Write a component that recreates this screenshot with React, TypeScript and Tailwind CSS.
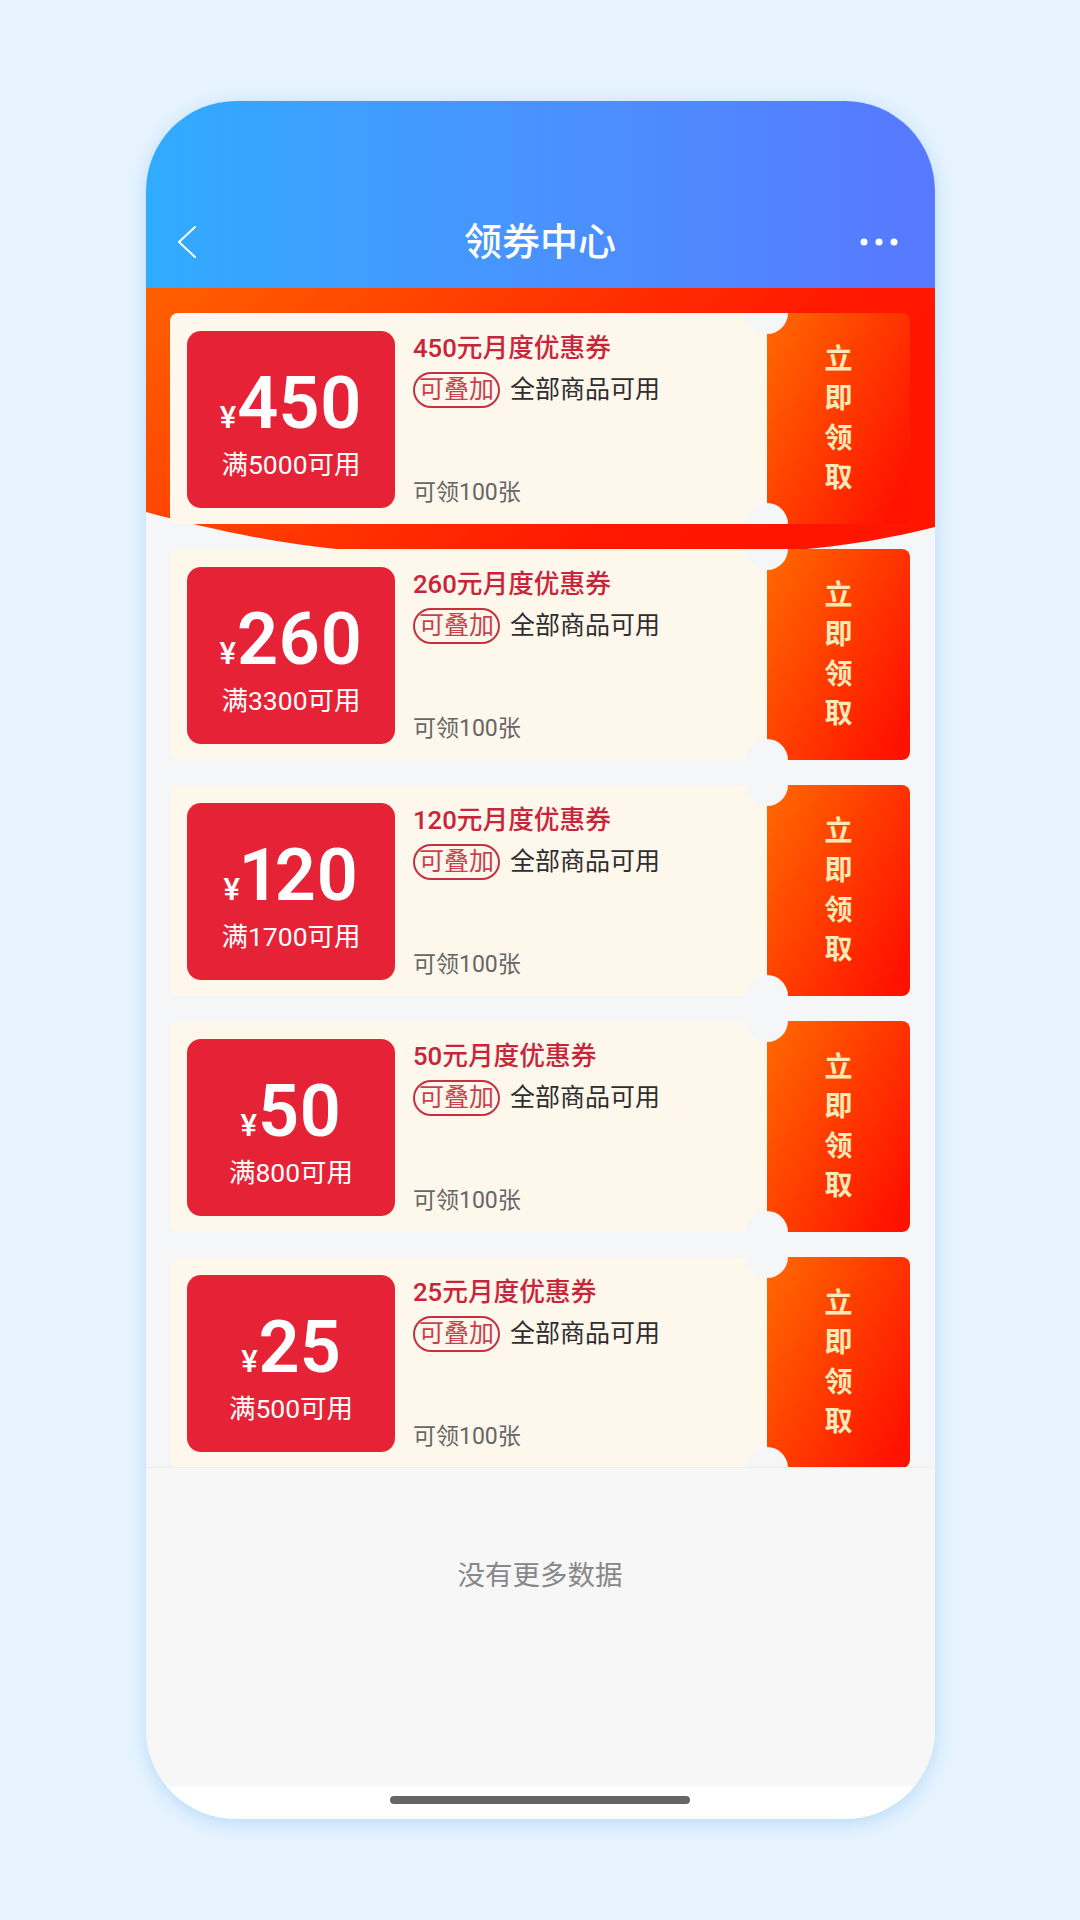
const font = { fontFamily: '"Roboto", "Noto Sans CJK SC", sans-serif' };

const coupons = [
  { amount: "450", min: "满5000可用", title: "450元月度优惠券" },
  { amount: "260", min: "满3300可用", title: "260元月度优惠券" },
  { amount: "120", min: "满1700可用", title: "120元月度优惠券" },
  { amount: "50", min: "满800可用", title: "50元月度优惠券" },
  { amount: "25", min: "满500可用", title: "25元月度优惠券" },
];

const CouponCard = ({ amount, min, title }: { amount: string; min: string; title: string }) => {
  return (
    <div className="relative flex h-[211px] w-[740px] shrink-0 overflow-hidden rounded-[8px]">
      <div className="flex w-[597px] bg-[#FEF7EB] pl-[17px] pt-[18px]">
        <div className="flex h-[177px] w-[208px] flex-col items-center rounded-[14px] bg-[#E62336] pt-[37px] text-white">
          <div className="flex h-[72px] items-baseline leading-[72px]">
            <span className="mr-[1px] text-[31px] font-medium">¥</span>
            <span className="text-[72px] font-semibold proportional-nums">{amount}</span>
          </div>
          <div className="mt-[10px] text-[26.5px] leading-[30px]">{min}</div>
        </div>
        <div className="ml-[18px] flex h-[177px] flex-col">
          <div className="text-[25.7px] font-medium leading-[34px] text-[#C9243A]">{title}</div>
          <div className="mt-[6px] flex items-center">
            <span className="flex h-[36px] w-[87px] items-center justify-center rounded-full border-2 border-[#C9303F] text-[25px] text-[#C9404E]">
              可叠加
            </span>
            <span className="ml-[10px] text-[25px] text-[#2E2E2E]">全部商品可用</span>
          </div>
          <div className="mt-auto text-[23px] leading-[30px] text-[#666666]">可领100张</div>
        </div>
      </div>
      <div className="flex w-[143px] flex-col items-center justify-center bg-[linear-gradient(115deg,#FF6A00,#FF1300_90%)] text-[28px] font-bold leading-[39.5px] text-[#FFE9B8]">
        <span>立</span>
        <span>即</span>
        <span>领</span>
        <span>取</span>
      </div>
      <div className="absolute -top-[21px] left-[576px] h-[42px] w-[42px] rounded-full bg-[#F5F6F8]"></div>
      <div className="absolute -bottom-[21px] left-[576px] h-[42px] w-[42px] rounded-full bg-[#F5F6F8]"></div>
    </div>
  );
};

export default function App() {
  return (
    <div className="h-[1920px] overflow-hidden bg-[#E6F3FF] pt-[101px]" style={font}>
      <div className="mx-auto flex h-[1718px] w-[789px] flex-col overflow-hidden rounded-[90px] bg-white shadow-[0_4px_18px_#B8DAF8]">
        <header className="flex h-[187px] shrink-0 items-end bg-gradient-to-r from-[#2FABFF] to-[#5778FF]">
          <div className="flex h-[92px] w-full items-center text-white">
            <div className="w-[120px] pl-[32px]">
              <svg width="18" height="32" viewBox="0 0 18 32" fill="none" stroke="#fff" strokeWidth="2" strokeLinecap="round" strokeLinejoin="round">
                <polyline points="17,1 1,16 17,31" />
              </svg>
            </div>
            <h1 className="flex-1 text-center text-[38px] font-medium">领券中心</h1>
            <div className="flex w-[120px] justify-end pr-[37px]">
              <svg width="38" height="8" viewBox="0 0 38 8" fill="#fff">
                <circle cx="4" cy="4" r="3.5" />
                <circle cx="19" cy="4" r="3.5" />
                <circle cx="34" cy="4" r="3.5" />
              </svg>
            </div>
          </div>
        </header>

        <div className="relative flex h-[1179px] shrink-0 flex-col gap-[25px] overflow-hidden bg-[#F5F6F8] pl-[24.5px] pt-[25px]">
          <svg className="absolute left-0 top-0" width="789" height="262" viewBox="0 0 789 262">
            <defs>
              <linearGradient id="banner" x1="0" y1="0" x2="1" y2="0.35">
                <stop offset="0" stopColor="#FF6000" />
                <stop offset="0.8" stopColor="#FF1800" />
                <stop offset="1" stopColor="#FF1500" />
              </linearGradient>
            </defs>
            <path d="M0 0H789V239C745 250 700 258 650 262H200C130 256 60 240 0 224Z" fill="url(#banner)" />
          </svg>
          {coupons.map((coupon) => (
            <div key={coupon.amount} className="relative">
              <CouponCard {...coupon} />
            </div>
          ))}
        </div>

        <div className="flex h-[319px] shrink-0 justify-center border-t border-[#EFEDEA] bg-[#F7F7F7] pt-[88px] text-[27.5px] leading-[40px] text-[#888888]">
          没有更多数据
        </div>

        <div className="flex flex-1 justify-center bg-white pt-[10px]">
          <div className="h-[7.5px] w-[300px] rounded-full bg-[#666666]"></div>
        </div>
      </div>
    </div>
  );
}
